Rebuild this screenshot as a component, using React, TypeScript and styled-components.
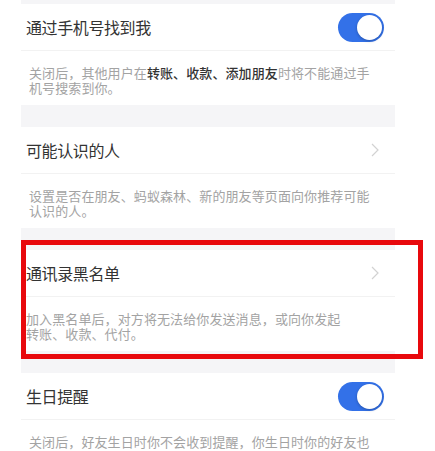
import React from "react";
import styled, { createGlobalStyle } from "styled-components";

const Global = createGlobalStyle`
  html, body { margin: 0; padding: 0; background: #ffffff; }
  body { font-family: "Noto Sans CJK SC", "Noto Sans", sans-serif; }
`;

const Page = styled.div`
  position: relative;
  width: 435px;
  height: 451px;
  overflow: hidden;
  background: #ffffff;
`;

const Panel = styled.div`
  margin-left: 21px;
  width: 374px;
  display: flex;
  flex-direction: column;
`;

const Gap = styled.div<{ $h: number }>`
  height: ${(p) => p.$h}px;
  background: #f5f5f7;
`;

const Row = styled.div`
  height: 47px;
  box-sizing: border-box;
  padding: 0 12px 0 5px;
  display: flex;
  align-items: center;
  justify-content: space-between;
  background: #fff;
  border-bottom: 1px solid #f2f2f2;
`;

const Title = styled.span`
  font-size: 16px;
  color: #333;
  letter-spacing: -0.4px;
`;

const Desc = styled.div<{ $indent: number }>`
  height: 54px;
  box-sizing: border-box;
  padding: 14px 0 0 ${(p) => p.$indent}px;
  font-size: 13px;
  line-height: 15px;
  color: #a3a3a3;
  letter-spacing: 0.1px;
  background: #fff;
`;

const Strong = styled.span`
  color: #333;
  font-weight: 500;
`;

const Toggle = styled.div`
  width: 46px;
  height: 29px;
  border-radius: 15px;
  background: #3371e8;
  display: flex;
  align-items: center;
  justify-content: flex-end;
  padding-right: 2px;
  box-sizing: border-box;
  margin-right: -1px;
`;

const Knob = styled.div`
  width: 25px;
  height: 25px;
  border-radius: 50%;
  background: #fff;
  box-shadow: 0 1px 3px rgba(0, 0, 0, 0.25);
`;

const Chevron = () => (
  <svg width="10" height="16" viewBox="0 0 10 16" style={{ marginRight: 3 }}>
    <path d="M2 2 L8 8 L2 14" fill="none" stroke="#d2d2d2" strokeWidth="1.2" />
  </svg>
);

const Highlight = styled.div`
  position: absolute;
  left: 21px;
  top: 240px;
  width: 402px;
  height: 119px;
  box-sizing: border-box;
  border: 5px solid #e8090d;
  pointer-events: none;
`;

export default function App() {
  return (
    <Page>
      <Global />
      <Panel>
        <Gap $h={4} />
        <Row>
          <Title>通过手机号找到我</Title>
          <Toggle>
            <Knob />
          </Toggle>
        </Row>
        <Desc $indent={8}>
          关闭后，其他用户在<Strong>转账、收款、添加朋友</Strong>时将不能通过手
          <br />
          机号搜索到你。
        </Desc>
        <Gap $h={22} />
        <Row>
          <Title>可能认识的人</Title>
          <Chevron />
        </Row>
        <Desc $indent={8}>
          设置是否在朋友、蚂蚁森林、新的朋友等页面向你推荐可能
          <br />
          认识的人。
        </Desc>
        <Gap $h={22} />
        <Row>
          <Title>通讯录黑名单</Title>
          <Chevron />
        </Row>
        <Desc $indent={5}>
          加入黑名单后，对方将无法给你发送消息，或向你发起
          <br />
          转账、收款、代付。
        </Desc>
        <Gap $h={22} />
        <Row>
          <Title>生日提醒</Title>
          <Toggle>
            <Knob />
          </Toggle>
        </Row>
        <Desc $indent={8}>
          关闭后，好友生日时你不会收到提醒，你生日时你的好友也
          <br />
          不会收到提醒。
        </Desc>
      </Panel>
      <Highlight />
    </Page>
  );
}
